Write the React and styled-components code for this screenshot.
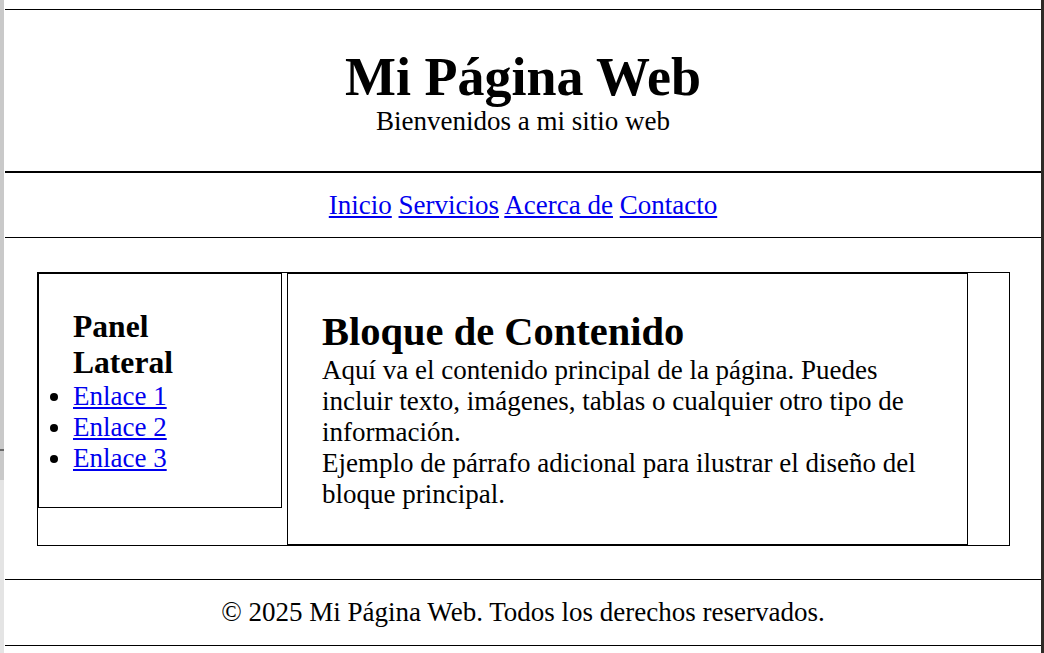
import React from 'react'
import styled, { createGlobalStyle } from 'styled-components'

const GlobalStyle = createGlobalStyle`
    html, body {
        margin: 0;
        padding: 0;
        background: #fff;
    }

    body {
        font-family: "Liberation Serif", "Times New Roman", serif;
        font-size: 27px;
        color: #000;
    }
`

const Frame = styled.div`
    display: flex;
    height: 100vh;
    overflow: hidden;
`

// browser chrome edges that show in the capture
const LeftRail = styled.div`
    flex: 0 0 4px;
    background: linear-gradient(
        to bottom,
        #c9c9c9 0px,
        #c9c9c9 449px,
        #6a6a6a 449px,
        #6a6a6a 451px,
        #c9c9c9 451px,
        #c9c9c9 480px,
        #e4e4e4 480px
    );
`

const RightRail = styled.div`
    flex: 0 0 3px;
    background: #2f2b27;
`

const Page = styled.div`
    flex: 1;
    padding: 9px 0 0 1px;
    min-width: 0;
`

const Header = styled.header`
    border-top: 1px solid #000;
    border-bottom: 1px solid #000;
    padding: 38px 0 34px;
    text-align: center;
`

const Title = styled.h1`
    margin: 0;
    font-size: 54px;
    line-height: 58px;
    font-weight: bold;
`

const Tagline = styled.p`
    margin: 0;
`

const Nav = styled.nav`
    border-top: 1px solid #000;
    border-bottom: 1px solid #000;
    padding: 17px 0 16px;
    text-align: center;
`

const Link = styled.a`
    color: #0000ee;
    text-decoration: underline;
`

const Layout = styled.section`
    display: flex;
    align-items: stretch;
    margin: 34px 31px 33px 32px;
    border: 1px solid #000;
`

const Sidebar = styled.aside`
    flex: 0 0 244px;
    box-sizing: border-box;
    align-self: flex-start;
    border: 1px solid #000;
    padding: 35px 34px 33px;
`

const SideTitle = styled.h3`
    margin: 0;
    font-size: 1.17em;
    font-weight: bold;
`

const LinkList = styled.ul`
    margin: 0;
    padding: 0;
    list-style: disc outside;
`

const Content = styled.main`
    flex: 0 0 681px;
    box-sizing: border-box;
    margin-left: 5px;
    border: 1px solid #000;
    padding: 34px;
`

const ContentTitle = styled.h2`
    margin: 0;
    font-size: 1.5em;
    font-weight: bold;
`

const Paragraph = styled.p`
    margin: 0;
`

const Footer = styled.footer`
    border-top: 1px solid #000;
    border-bottom: 1px solid #000;
    padding: 17px 0;
    text-align: center;
`

const App = () => (
    <Frame>
        <GlobalStyle />
        <LeftRail />
        <Page>
            <Header>
                <Title>Mi Página Web</Title>
                <Tagline>Bienvenidos a mi sitio web</Tagline>
            </Header>
            <Nav>
                <Link href="#inicio">Inicio</Link>{' '}
                <Link href="#servicios">Servicios</Link>{' '}
                <Link href="#acerca">Acerca de</Link>{' '}
                <Link href="#contacto">Contacto</Link>
            </Nav>
            <Layout>
                <Sidebar>
                    <SideTitle>Panel Lateral</SideTitle>
                    <LinkList>
                        <li><Link href="#1">Enlace 1</Link></li>
                        <li><Link href="#2">Enlace 2</Link></li>
                        <li><Link href="#3">Enlace 3</Link></li>
                    </LinkList>
                </Sidebar>
                <Content>
                    <ContentTitle>Bloque de Contenido</ContentTitle>
                    <Paragraph>
                        Aquí va el contenido principal de la página. Puedes incluir texto, imágenes, tablas o cualquier otro tipo de información.
                    </Paragraph>
                    <Paragraph>
                        Ejemplo de párrafo adicional para ilustrar el diseño del bloque principal.
                    </Paragraph>
                </Content>
            </Layout>
            <Footer>© 2025 Mi Página Web. Todos los derechos reservados.</Footer>
        </Page>
        <RightRail />
    </Frame>
)

export default App
